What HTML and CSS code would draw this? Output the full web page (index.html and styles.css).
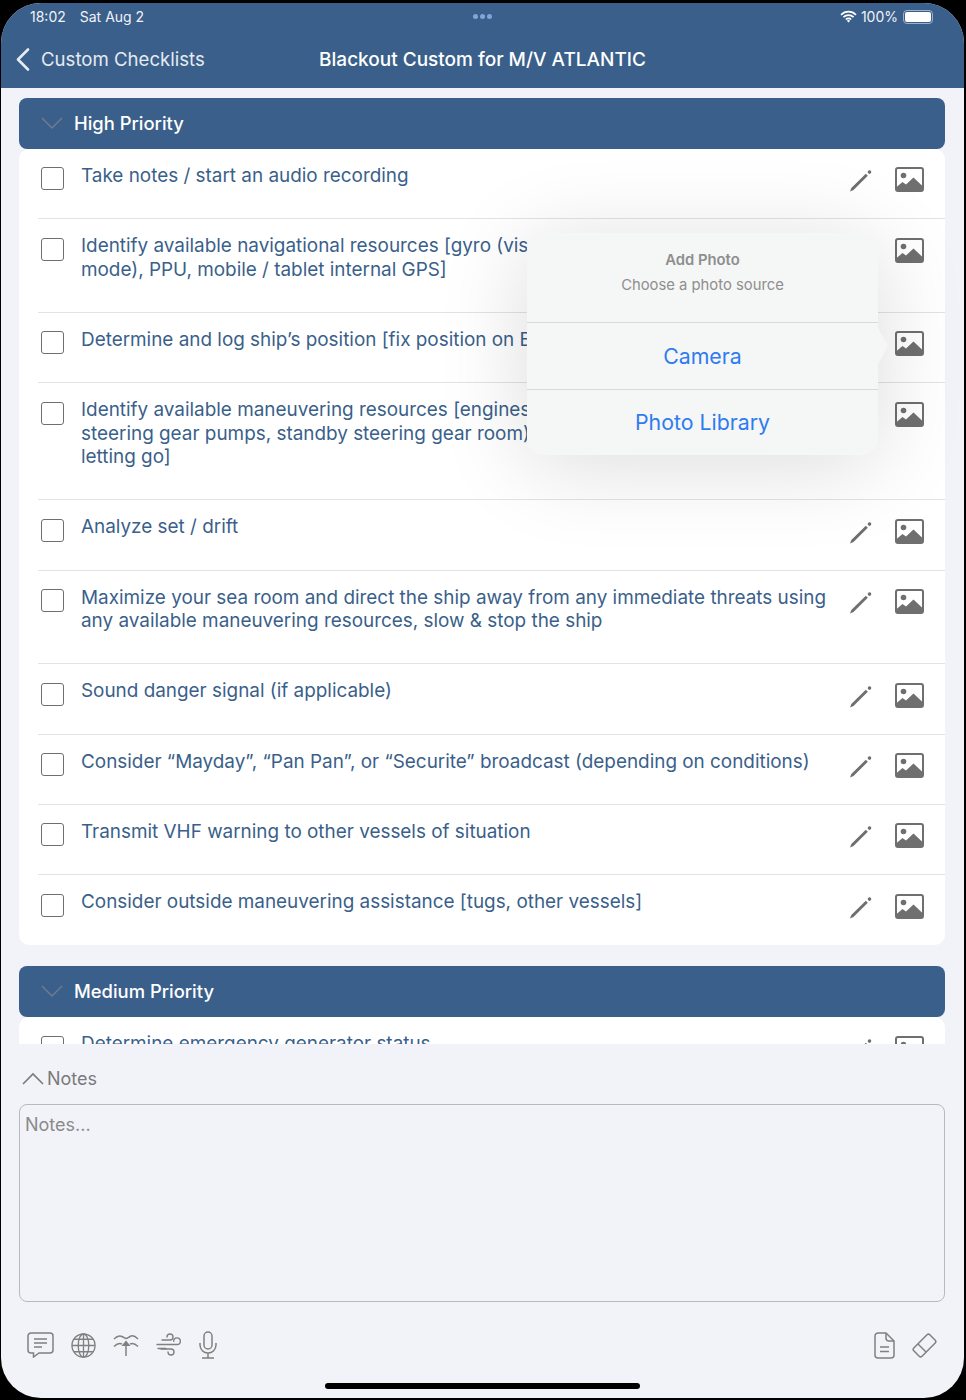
FILE: index.html
```html
<!DOCTYPE html>
<html lang="en">
<head>
    <meta charset="UTF-8">
    <meta name="viewport" content="width=device-width, initial-scale=1.0">
    <title>Blackout Custom for M/V ATLANTIC</title>
    <link rel="stylesheet" href="styles.css">
</head>
<body>
    <svg class="sprites" width="0" height="0">
        <symbol id="pencil" viewBox="0 0 23 24">
            <path d="M1 22.500l1.300-3.600L16.800 4.800l2 2L4.500 21z" fill="#6f6f6f"/>
            <circle cx="20.500" cy="3.100" r="1.800" fill="#6f6f6f"/>
        </symbol>
        <symbol id="photo" viewBox="0 0 29 25">
            <rect x="1" y="1" width="27" height="23" rx="2" fill="none" stroke="#6f6f6f" stroke-width="2"/>
            <circle cx="8.500" cy="8.500" r="2.800" fill="#6f6f6f"/>
            <path d="M1 20.500l6.500-5.500 3.500 2.500 7.500-7 9.500 9V22a2 2 0 0 1-2 2H3a2 2 0 0 1-2-2z" fill="#6f6f6f"/>
        </symbol>
    </svg>

    <div class="screen">
        <header class="topbar">
            <div class="status">
                <span class="status-left"><span>18:02</span><span>Sat Aug 2</span></span>
                <span class="status-dots"><i></i><i></i><i></i></span>
                <span class="status-right">
                    <svg width="17" height="13" viewBox="0 0 17 13">
                        <path d="M1 4.800a10.600 10.600 0 0 1 15 0M3.400 7.200a7.200 7.200 0 0 1 10.200 0M5.800 9.500a3.800 3.800 0 0 1 5.400 0" fill="none" stroke="#fff" stroke-width="1.700"/>
                        <path d="M8.500 12.600l-1.700-1.800a2.400 2.400 0 0 1 3.400 0z" fill="#fff"/>
                    </svg>
                    <span>100%</span>
                    <span class="battery"><i></i></span>
                </span>
            </div>
            <nav class="navbar">
                <a class="back">
                    <svg width="14" height="23" viewBox="0 0 14 23"><path d="M12 1.500L2 11.500l10 10" fill="none" stroke="#e6ebf1" stroke-width="2.600" stroke-linecap="round" stroke-linejoin="round"/></svg>
                    Custom Checklists
                </a>
                <h1>Blackout Custom for M/V ATLANTIC</h1>
            </nav>
        </header>

        <main class="list">
            <section class="group">
                <h2 class="group-head">
                    <svg width="22" height="12" viewBox="0 0 22 12"><path d="M1 1l10 10L21 1" fill="none" stroke="#6f7d8c" stroke-width="1.400"/></svg>
                    High Priority
                </h2>
                <div class="card">
                    <div class="row"><span class="check"></span><p>Take notes / start an audio recording</p><span class="tools"><svg class="ico-pencil"><use href="#pencil"/></svg><svg class="ico-photo"><use href="#photo"/></svg></span></div>
                    <div class="row"><span class="check"></span><p>Identify available navigational resources [gyro (visual bearings, radar, autopilot<br>mode), PPU, mobile / tablet internal GPS]</p><span class="tools"><svg class="ico-pencil"><use href="#pencil"/></svg><svg class="ico-photo"><use href="#photo"/></svg></span></div>
                    <div class="row"><span class="check"></span><p>Determine and log ship’s position [fix position on ECDIS and paper chart]</p><span class="tools"><svg class="ico-pencil"><use href="#pencil"/></svg><svg class="ico-photo"><use href="#photo"/></svg></span></div>
                    <div class="row"><span class="check"></span><p>Identify available maneuvering resources [engines, bow thruster, rudder,<br>steering gear pumps, standby steering gear room), anchors ready for<br>letting go]</p><span class="tools"><svg class="ico-pencil"><use href="#pencil"/></svg><svg class="ico-photo"><use href="#photo"/></svg></span></div>
                    <div class="row"><span class="check"></span><p>Analyze set / drift</p><span class="tools"><svg class="ico-pencil"><use href="#pencil"/></svg><svg class="ico-photo"><use href="#photo"/></svg></span></div>
                    <div class="row"><span class="check"></span><p>Maximize your sea room and direct the ship away from any immediate threats using any available maneuvering resources, slow &amp; stop the ship</p><span class="tools"><svg class="ico-pencil"><use href="#pencil"/></svg><svg class="ico-photo"><use href="#photo"/></svg></span></div>
                    <div class="row"><span class="check"></span><p>Sound danger signal (if applicable)</p><span class="tools"><svg class="ico-pencil"><use href="#pencil"/></svg><svg class="ico-photo"><use href="#photo"/></svg></span></div>
                    <div class="row"><span class="check"></span><p>Consider “Mayday”, “Pan Pan”, or “Securite” broadcast (depending on conditions)</p><span class="tools"><svg class="ico-pencil"><use href="#pencil"/></svg><svg class="ico-photo"><use href="#photo"/></svg></span></div>
                    <div class="row"><span class="check"></span><p>Transmit VHF warning to other vessels of situation</p><span class="tools"><svg class="ico-pencil"><use href="#pencil"/></svg><svg class="ico-photo"><use href="#photo"/></svg></span></div>
                    <div class="row"><span class="check"></span><p>Consider outside maneuvering assistance [tugs, other vessels]</p><span class="tools"><svg class="ico-pencil"><use href="#pencil"/></svg><svg class="ico-photo"><use href="#photo"/></svg></span></div>
                </div>
            </section>

            <section class="group">
                <h2 class="group-head">
                    <svg width="22" height="12" viewBox="0 0 22 12"><path d="M1 1l10 10L21 1" fill="none" stroke="#6f7d8c" stroke-width="1.400"/></svg>
                    Medium Priority
                </h2>
                <div class="card">
                    <div class="row"><span class="check"></span><p>Determine emergency generator status</p><span class="tools"><svg class="ico-pencil"><use href="#pencil"/></svg><svg class="ico-photo"><use href="#photo"/></svg></span></div>
                </div>
            </section>

            <div class="popover">
                <div class="popover-head">
                    <strong>Add Photo</strong>
                    <span>Choose a photo source</span>
                </div>
                <a class="popover-btn">Camera</a>
                <a class="popover-btn">Photo Library</a>
                <i class="popover-arrow"></i>
            </div>
        </main>

        <section class="notes">
            <div class="notes-label">
                <svg width="22" height="13" viewBox="0 0 22 13"><path d="M1 12L11 2l10 10" fill="none" stroke="#7a7a7a" stroke-width="1.600"/></svg>
                Notes
            </div>
            <div class="notes-box">Notes...</div>
        </section>

        <footer class="toolbar">
            <div class="toolbar-group">
                <svg width="27" height="26" viewBox="0 0 27 26" fill="none" stroke="#808080" stroke-width="1.500">
                    <path d="M4 1h19a3 3 0 0 1 3 3v14a3 3 0 0 1-3 3H12l-5.500 4v-4H4a3 3 0 0 1-3-3V4a3 3 0 0 1 3-3z"/>
                    <path d="M7 7h13M7 11h13M7 15h8"/>
                </svg>
                <svg width="25" height="25" viewBox="0 0 26 26" fill="none" stroke="#808080" stroke-width="1.400">
                    <circle cx="13" cy="13" r="12"/>
                    <ellipse cx="13" cy="13" rx="5.500" ry="12"/>
                    <path d="M13 1v24M1 13h24M3 6.500h20M3 19.500h20"/>
                </svg>
                <svg width="26" height="24" viewBox="0 0 26 24" fill="none" stroke="#808080" stroke-width="1.500">
                    <path d="M1 6c3-3 5-4 8-2.500s3 2 4 2 1.500-.5 4-2 5-.5 8 2.500"/>
                    <path d="M1 13.500c3-3 5-4 8-2.500M17 11c3-1.500 5-.5 8 2.500"/>
                    <path d="M13 23V10"/>
                    <path d="M13 7.500l4.500 5.500h-9z" fill="#808080" stroke="none"/>
                </svg>
                <svg width="26" height="25" viewBox="0 0 26 25" fill="none" stroke="#808080" stroke-width="1.400" stroke-linecap="round">
                    <path d="M6 7h8a3 3 0 1 0-3-3"/>
                    <path d="M1 11.500h20a3.300 3.300 0 1 0-3.300-3.300"/>
                    <path d="M2 15.500h8"/>
                    <path d="M5 16h10a3 3 0 1 1-3 3"/>
                </svg>
                <svg width="18" height="28" viewBox="0 0 18 28" fill="none" stroke="#808080" stroke-width="1.500">
                    <rect x="5" y="1" width="8" height="17" rx="4"/>
                    <path d="M1 12v2a8 8 0 0 0 16 0v-2M9 22v5M3 27h12"/>
                </svg>
            </div>
            <div class="toolbar-group">
                <svg width="21" height="27" viewBox="0 0 21 27" fill="none" stroke="#808080" stroke-width="1.500">
                    <path d="M4 1h8l8 8v14a3 3 0 0 1-3 3H4a3 3 0 0 1-3-3V4a3 3 0 0 1 3-3z"/>
                    <path d="M12 1v5a3 3 0 0 0 3 3h5M6 15h9M6 19.500h9"/>
                </svg>
                <svg width="25" height="25" viewBox="0 0 25 25" fill="none" stroke="#808080" stroke-width="1.500">
                    <path d="M15 1.800a2 2 0 0 1 2.800 0l5.400 5.400a2 2 0 0 1 0 2.800L10 23.200a2 2 0 0 1-2.800 0l-5.400-5.400a2 2 0 0 1 0-2.800z"/>
                    <path d="M6 11l8 8"/>
                </svg>
            </div>
        </footer>
        <div class="home-bar"></div>
    </div>
</body>
</html>
```

FILE: styles.css
```css
html, body { margin: 0; background: #000; }
body { font-family: Inter, "Liberation Sans", sans-serif; }
.sprites { position: absolute; }

.screen { margin: 3px 2px 2px 1px; height: 1395px; border-radius: 40px; overflow: hidden; background: #f2f3f8; display: flex; flex-direction: column; }

.topbar { background: #3a5f8a; color: #fff; height: 85px; flex: none; }
.status { display: grid; grid-template-columns: 1fr auto 1fr; align-items: center; height: 27px; padding: 0 31px 0 29px; font-size: 14px; color: #f0f3f7; }
.status-left { display: flex; gap: 14px; }
.status-dots { display: flex; gap: 2px; margin-left: 1px; }
.status-dots i { width: 5px; height: 5px; border-radius: 50%; background: #7fa6d6; }
.status-right { display: flex; align-items: center; justify-content: flex-end; gap: 4px; }
.battery { width: 26px; height: 10px; border: 1px solid #9db1c8; border-radius: 4px; padding: 1px; display: block; margin-left: 1px; }
.battery i { display: block; height: 100%; background: #fff; border-radius: 2px; }

.navbar { display: flex; align-items: center; justify-content: center; height: 58px; position: relative; }
.navbar h1 { margin: 0; font-size: 19px; font-weight: 500; color: #fff; }
.back { position: absolute; left: 15px; top: 0; height: 58px; display: flex; align-items: center; gap: 11px; font-size: 18.6px; color: #e6ebf1; }

.list { flex: none; height: 956px; overflow: hidden; position: relative; padding: 10px 19px 0 18px; box-sizing: border-box; }
.group { margin-bottom: 21px; }
.group-head { margin: 0; height: 51px; box-sizing: border-box; padding: 0 0 2px 22px; background: #3a5f8a; border-radius: 8px; display: flex; align-items: center; gap: 11px; color: #fff; font-size: 18.4px; font-weight: 500; }
.card { background: #fff; border-radius: 10px; padding: 0 0 1px 19px; }
.row { display: flex; align-items: flex-start; padding-top: 14.4px; border-bottom: 1px solid #e2e3e6; }
.card .row:last-child { border-bottom: none; }
.check { flex: none; width: 21px; height: 21px; border: 1.5px solid #6f6f6f; border-radius: 3px; margin: 4px 17px 0 3px; background: #fff; }
.row p { flex: 1; margin: .6px 0 30.9px; font-size: 18.9px; line-height: 23.4px; color: #3a5f8a; }
.tools { flex: none; width: 117px; display: flex; align-items: flex-start; padding: 4px 21px 0 21px; box-sizing: border-box; justify-content: space-between; }
.ico-pencil { width: 23px; height: 24px; margin-top: 2px; }
.ico-photo { width: 29px; height: 25px; }

.popover { position: absolute; left: 526px; top: 145px; width: 351px; height: 222px; background: #f5f6f6; border-radius: 16px; box-shadow: 0 10px 90px rgba(0,0,0,.14); display: flex; flex-direction: column; }
.popover-head { height: 90px; display: flex; flex-direction: column; align-items: center; padding-top: 18px; box-sizing: border-box; border-bottom: 1px solid #d8d9da; font-size: 14.8px; color: #8e8e8e; gap: 7px; }
.popover-head strong { font-weight: 600; }
.popover-btn { flex: 1; display: flex; align-items: center; justify-content: center; font-size: 21.3px; color: #2f7bf0; }
.popover-btn + .popover-btn { border-top: 1px solid #d8d9da; }
.popover-arrow { position: absolute; right: -10px; top: 95px; width: 0; height: 0; border-top: 18px solid transparent; border-bottom: 18px solid transparent; border-left: 10px solid #f5f6f6; }

.notes { flex: none; padding: 0 19px 0 18px; }
.notes-label { display: flex; align-items: center; gap: 3px; height: 50px; padding: 9px 0 1px 3px; color: #7a7a7a; font-size: 18px; }
.notes-box { height: 198px; box-sizing: border-box; border: 1px solid #b9b9b9; border-radius: 8px; padding: 9px 5px; color: #8a8a8a; font-size: 18px; }

.toolbar { flex: none; display: flex; justify-content: space-between; align-items: center; padding: 29px 27px 0 26px; }
.toolbar-group { display: flex; align-items: center; gap: 17px; }
.home-bar { position: absolute; left: 325px; top: 1383px; width: 315px; height: 6px; border-radius: 3px; background: #000; }
```
